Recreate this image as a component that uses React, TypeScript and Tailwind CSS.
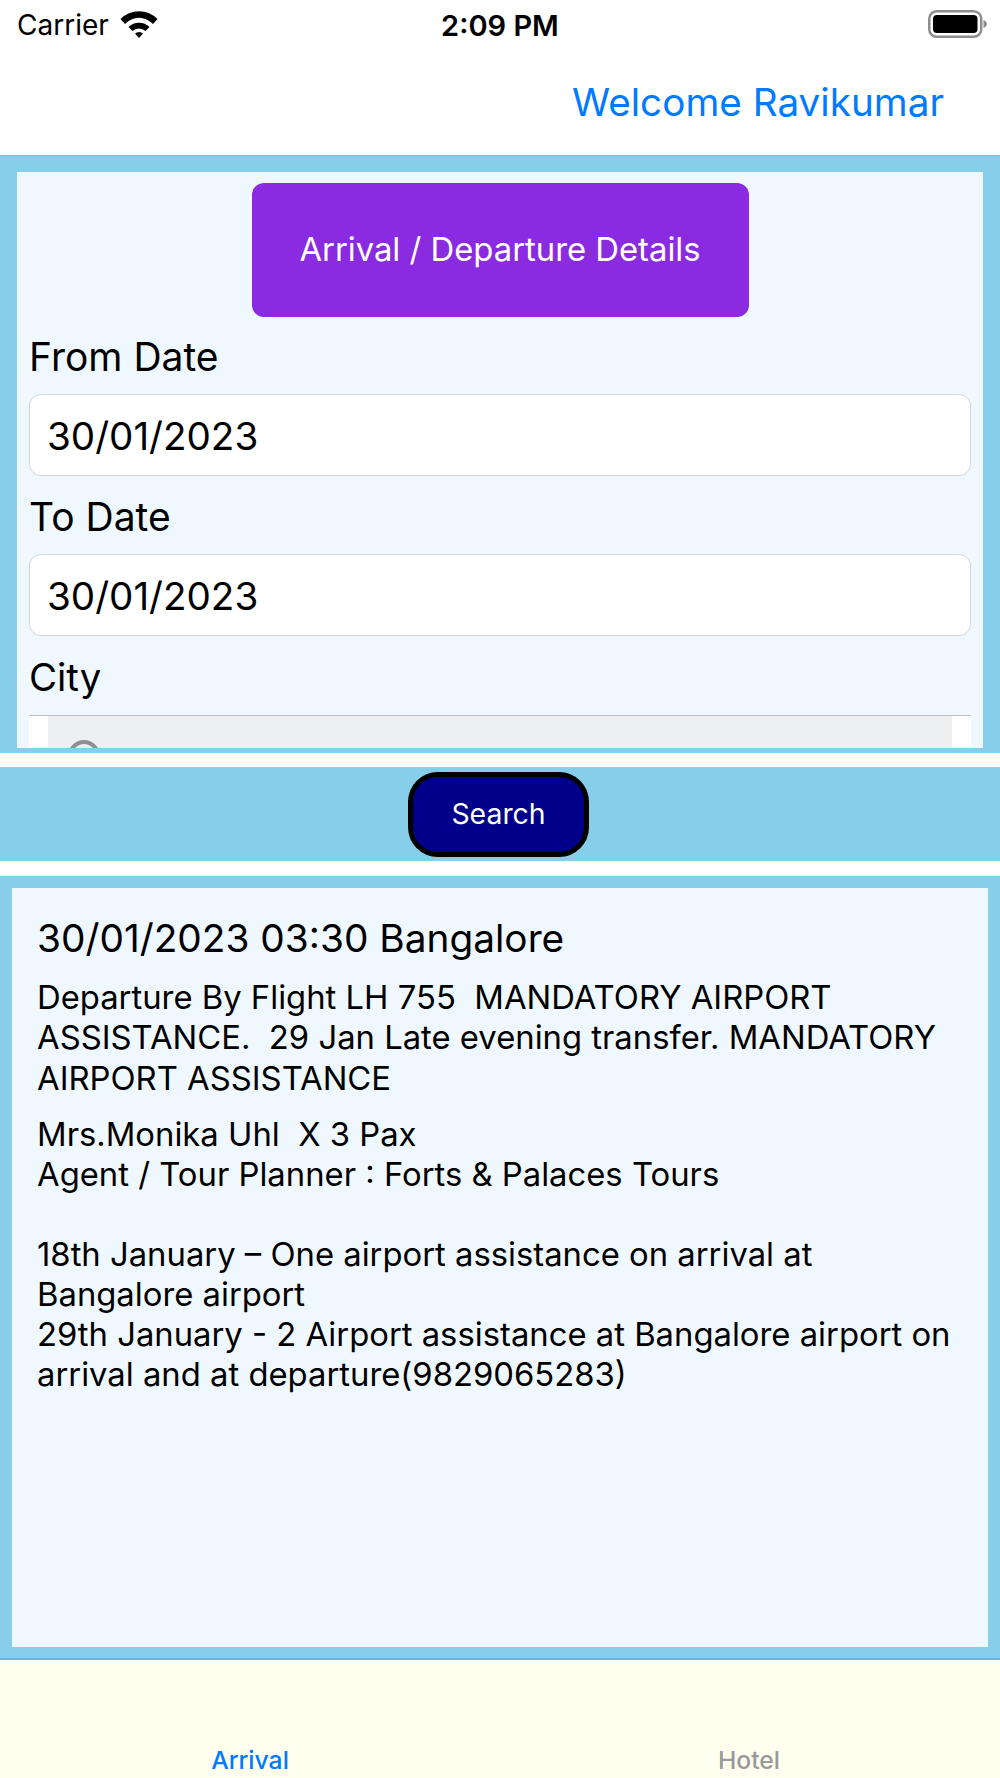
import React from "react";

const DateField = ({ label, value }: { label: string; value: string }) => (
  <div>
    <div className="h-[78px] pt-[3px] flex items-center text-[39px] leading-none text-black">{label}</div>
    <div className="h-[82px] rounded-[12px] border border-[#d4d6da] bg-white pl-[17px] pt-[3px] flex items-center text-[38.6px] text-black">
      {value}
    </div>
  </div>
);

const StatusBar = () => (
  <div className="h-[50px] relative flex items-center justify-between pl-[17px] pr-[12px]">
    <div className="flex items-center gap-[11px]">
      <span className="text-[28px] text-black leading-none">Carrier</span>
      <svg width="38" height="28" viewBox="0 0 38 28" className="mt-[-2px]">
        <path d="M0.5 9 A 26 26 0 0 1 37.500 9 L33 14 A 19 19 0 0 0 5 14 Z" fill="black" />
        <path d="M8.5 17 A 15 15 0 0 1 29.5 17 L25.500 21 A 9.5 9.5 0 0 0 12.500 21 Z" fill="black" />
        <path d="M15 23.5 A 6 6 0 0 1 23 23.5 L19 28 Z" fill="black" />
      </svg>
    </div>
    <span className="absolute left-0 right-0 text-center text-[29px] font-semibold text-black leading-none">
      2:09 PM
    </span>
    <svg width="60" height="28" viewBox="0 0 60 28" className="mt-[-3px]">
      <rect x="1.25" y="1.25" width="52" height="25.500" rx="7.500" fill="none" stroke="#8e8e8e" strokeWidth="2.500" />
      <rect x="5" y="5" width="44.500" height="18" rx="4" fill="black" />
      <path d="M55.500 10 C57.500 11 59 12.500 59 14 C59 15.500 57.500 17 55.500 18 Z" fill="#8e8e8e" />
    </svg>
  </div>
);

export default function App() {
  return (
    <div className="w-[1000px] h-[1778px] overflow-hidden bg-white flex flex-col font-['Inter',sans-serif]">
      <StatusBar />

      <div className="h-[106px] border-b border-[#7fb8d2] flex items-center justify-end pr-[56px]">
        <span className="text-[38.7px] text-[#007aff] leading-none mt-[-1px]">Welcome Ravikumar</span>
      </div>

      <div className="h-[597px] shrink-0 bg-[#87ceeb] pt-[16px] px-[17px] pb-[5px]">
        <div className="h-full overflow-hidden bg-[#f0f8ff] px-[12px] pt-[11px]">
          <div className="w-[497px] h-[134px] mx-auto rounded-[12px] bg-[#8a2be2] flex items-center justify-center text-[32.8px] text-white">
            Arrival / Departure Details
          </div>
          <div className="-mt-[1px]">
            <DateField label="From Date" value="30/01/2023" />
            <DateField label="To Date" value="30/01/2023" />
          </div>
          <div className="h-[79px] pt-[3px] flex items-center text-[38.4px] leading-none text-black">City</div>
          <div className="h-[60px] border-t border-[#bcc0c6] bg-white px-[19px]">
            <div className="h-full bg-[#eeeff1] pl-[20px] pt-[24px]">
              <div className="w-[32px] h-[32px] rounded-full border-[4px] border-[#8e8e93]" />
            </div>
          </div>
        </div>
      </div>

      <div className="mt-[14px] h-[94px] shrink-0 bg-[#87ceeb] flex items-center justify-center">
        <div className="w-[181px] h-[85px] mr-[3px] pt-[1px] rounded-[30px] border-[5px] border-black bg-[#00008b] flex items-center justify-center text-[28.4px] text-white">
          Search
        </div>
      </div>

      <div className="mt-[15px] h-[784px] shrink-0 bg-[#87ceeb] border-b-[2px] border-[#74b4d0] pt-[12px] px-[12px] pb-[11px]">
        <div className="h-full bg-[#f0f8ff] px-[25px] pt-[25px] text-black">
          <div className="text-[38.8px] leading-[50px]">30/01/2023 03:30 Bangalore</div>
          <div className="mt-[14px] text-[32.8px] leading-[40.3px] whitespace-pre-wrap">
            {"Departure By Flight LH 755  MANDATORY AIRPORT ASSISTANCE.  29 Jan Late evening transfer. MANDATORY AIRPORT ASSISTANCE"}
          </div>
          <div className="mt-[16px] text-[32.8px] leading-[40px] whitespace-pre-wrap">
            {"Mrs.Monika Uhl  X 3 Pax\nAgent / Tour Planner : Forts & Palaces Tours\n\n18th January – One airport assistance on arrival at Bangalore airport\n29th January - 2 Airport assistance at Bangalore airport on arrival and at departure(9829065283)"}
          </div>
        </div>
      </div>

      <div className="flex-1 bg-[#fffff0] flex items-end pb-[3px]">
        <div className="w-1/2 text-center text-[24.7px] font-medium leading-[30px] text-[#007aff]">Arrival</div>
        <div className="w-1/2 pr-[2px] text-center text-[24.7px] font-medium leading-[30px] text-[#999999]">Hotel</div>
      </div>
    </div>
  );
}
